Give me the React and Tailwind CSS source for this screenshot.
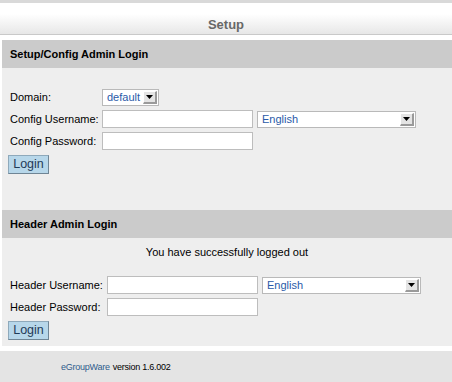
import React from 'react';

function Select({ value, width }) {
  return (
    <div
      className={`flex items-stretch bg-white border border-[#b9b9b9] h-[17px] ${width}`}
    >
      <span className="flex-1 flex items-center pl-[4px] text-[11px] text-[#2a5aa8] leading-none">
        {value}
      </span>
      <span className="w-[14px] my-[1px] mr-[1px] flex items-center justify-center bg-[#e4e4e4] border-r-2 border-b-2 border-[#9a9a9a] border-l border-t border-l-white border-t-white">
        <svg width="7" height="4" viewBox="0 0 7 4">
          <path d="M0 0h7L3.5 4z" fill="#000" />
        </svg>
      </span>
    </div>
  );
}

function Input({ width }) {
  return (
    <div className={`h-[18px] bg-white border border-[#bdbdbd] ${width}`} />
  );
}

function LoginButton() {
  return (
    <button className="h-[19px] w-[41px] ml-[6px] flex items-center justify-center bg-[#b7d7ea] border border-[#8ea9bb] border-b-[#6f8595] border-r-[#6f8595] text-[12.5px] text-[#1f3b58] leading-none">
      Login
    </button>
  );
}

function SectionHeader({ children }) {
  return (
    <div className="h-[28px] flex items-center pl-[8px] bg-[#cbcbcb] text-[11px] font-bold text-black">
      {children}
    </div>
  );
}

export default function App() {
  return (
    <div
      className="w-[452px] h-[382px] bg-white overflow-hidden text-[11px] text-black"
      style={{ fontFamily: "'Liberation Sans', Arial, sans-serif" }}
    >
      <div className="h-[3px] bg-[#d9d9d9]" />
      <div className="h-[32px] pt-[14px] border-b border-[#c9c9c9] bg-linear-to-b from-white from-35% to-[#e7e7e7] text-center text-[13px] leading-[16px] font-bold text-[#686868]">
        Setup
      </div>

      <div className="mt-[5px] ml-[2px] bg-[#eeeeee]">
        <SectionHeader>Setup/Config Admin Login</SectionHeader>
        <div className="pt-[18px] pb-[34px]">
          <div className="h-[22px] flex items-center">
            <span className="w-[100px] pl-[8px]">Domain:</span>
            <Select value="default" width="w-[57px]" />
          </div>
          <div className="h-[22px] flex items-center">
            <span className="w-[100px] pl-[8px]">Config Username:</span>
            <Input width="w-[151px]" />
            <div className="ml-[4px]">
              <Select value="English" width="w-[159px]" />
            </div>
          </div>
          <div className="h-[22px] flex items-center">
            <span className="w-[100px] pl-[8px]">Config Password:</span>
            <Input width="w-[151px]" />
          </div>
          <div className="h-[24px] flex items-center">
            <LoginButton />
          </div>
        </div>

        <SectionHeader>Header Admin Login</SectionHeader>
        <div className="pt-[5px] pb-[4px]">
          <div className="h-[18px] flex items-center justify-center">
            You have successfully logged out
          </div>
          <div className="h-[13px]" />
          <div className="h-[22px] flex items-center">
            <span className="w-[105px] pl-[8px]">Header Username:</span>
            <Input width="w-[151px]" />
            <div className="ml-[4px]">
              <Select value="English" width="w-[159px]" />
            </div>
          </div>
          <div className="h-[22px] flex items-center">
            <span className="w-[105px] pl-[8px]">Header Password:</span>
            <Input width="w-[151px]" />
          </div>
          <div className="h-[24px] flex items-center">
            <LoginButton />
          </div>
        </div>
      </div>

      <div className="mt-[5px] h-[31px] bg-[#e4e4e4] flex items-center pl-[61px] pt-[3px] text-[9px] tracking-[-0.25px]">
        <span className="text-[#2f5c8c]">eGroupWare</span>
        <span className="ml-[3px]">version 1.6.002</span>
      </div>
    </div>
  );
}
